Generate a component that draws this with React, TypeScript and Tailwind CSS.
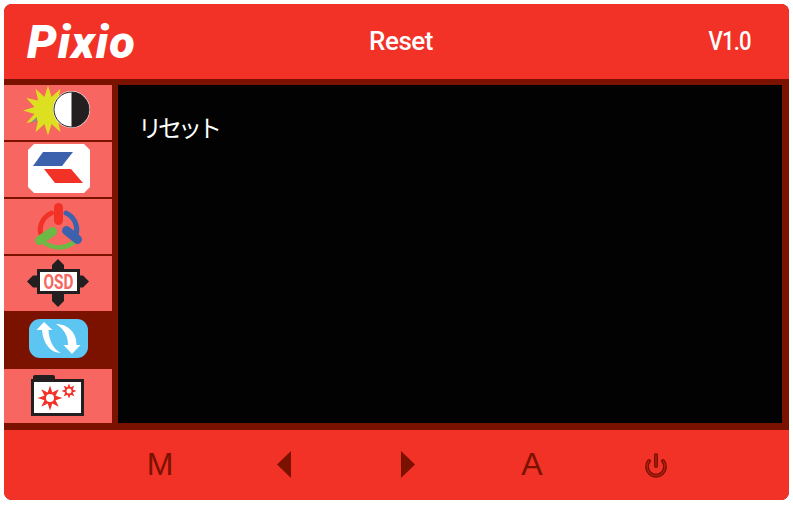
const Row = ({ active, box, className, children }: { active?: boolean; box: string; className?: string; children: React.ReactNode }) => (
  <div className={(active ? "h-[58px] bg-[#7b1200] " : "bg-[#f76660] ") + className}>
    <svg viewBox={box} className="block w-full h-full">{children}</svg>
  </div>
)

const spikes = (cx: number, cy: number, outer: number, inner: number, n: number) => {
  const pts: string[] = []
  for (let i = 0; i < n * 2; i++) {
    const r = i % 2 === 0 ? outer : inner
    const a = (Math.PI * i) / n - Math.PI / 2
    pts.push(`${(cx + r * Math.cos(a)).toFixed(1)},${(cy + r * Math.sin(a)).toFixed(1)}`)
  }
  return pts.join(" ")
}

export default function App() {
  return (
    <div className="w-[793px] h-[505px] bg-white p-1" style={{ fontFamily: "Roboto, sans-serif" }}>
      <div className="w-[785px] h-[496px] rounded-lg overflow-hidden bg-[#7b1200] flex flex-col">
        <div className="h-[75px] bg-[#f23127] flex items-center text-white pl-[23px]">
          <div className="w-[316px] text-[47px] leading-none font-black italic tracking-[1px]" style={{ fontFamily: "Roboto, sans-serif" }}>Pixio</div>
          <div className="w-[116px] text-center text-[26px] font-medium tracking-[-0.5px]">Reset</div>
          <div className="flex-1 text-right pr-[45px] text-[26px] font-medium tracking-[-1px] scale-x-[.85] origin-right">V1.0</div>
        </div>
        <div className="flex mt-[6px] h-[338px]">
          <div className="w-[108px] flex flex-col">
            <Row box="4 85 108 55" className="h-[55px]">
              <polygon points={spikes(48, 110.5, 25, 14, 12)} fill="#dde021" />
              <polygon points="30,123 37,117 37,121" fill="#8a8a8a" />
              <circle cx="71.5" cy="109.5" r="18.5" fill="#fff" />
              <circle cx="71.5" cy="109.5" r="17.5" fill="#fff" stroke="#231f20" strokeWidth="1" />
              <path d="M71.5 92a17.5 17.5 0 0 1 0 35z" fill="#231f20" />
            </Row>
            <Row box="4 142 108 55" className="h-[55px] mt-[2px]">
              <polygon points="34,144 84,144 90,150 90,187 84,193 34,193 28,187 28,150" fill="#fff" />
              <polygon points="33,166 43,152 73,152 62,166" fill="#3d62ad" />
              <polygon points="44,169 71,169 83,183 55,183" fill="#f23127" />
            </Row>
            <Row box="4 199 108 55" className="h-[55px] mt-[2px]">
              <path d="M51.5 213A18.5 18.5 0 0 0 40.5 233" fill="none" stroke="#f23127" strokeWidth="5" strokeLinecap="round" />
              <path d="M66 213A18.5 18.5 0 0 1 76.5 233" fill="none" stroke="#3d62ad" strokeWidth="5" strokeLinecap="round" />
              <path d="M45 243Q58.5 252 73 243" fill="none" stroke="#6cb945" strokeWidth="4.5" strokeLinecap="round" />
              <line x1="58.5" y1="207.5" x2="58.5" y2="220.5" stroke="#f23127" strokeWidth="9" strokeLinecap="round" />
              <line x1="66.5" y1="230.5" x2="77.5" y2="239.5" stroke="#3d62ad" strokeWidth="9" strokeLinecap="round" />
              <line x1="52.5" y1="231.5" x2="39.5" y2="240.5" stroke="#6cb945" strokeWidth="9" strokeLinecap="round" />
            </Row>
            <Row box="4 256 108 55" className="h-[55px] mt-[2px]">
              <polygon points="58,259 64,265 64,270 52,270 52,265" fill="#231f20" />
              <polygon points="58,307 64,301 64,293 52,293 52,301" fill="#231f20" />
              <polygon points="27,281.5 33,275.5 38,275.5 38,287.5 33,287.5" fill="#231f20" />
              <polygon points="89,281.5 83,275.5 79,275.5 79,287.5 83,287.5" fill="#231f20" />
              <rect x="37" y="269" width="43" height="25" fill="#231f20" />
              <rect x="40" y="272" width="37" height="19" fill="#fff" />
              <text x="58.5" y="289" textAnchor="middle" fontFamily="Roboto, sans-serif" fontWeight="700" fontSize="20" fill="#f76660" textLength="30" lengthAdjust="spacingAndGlyphs">OSD</text>
            </Row>
            <Row active box="4 311 108 58">
              <rect x="29" y="319" width="59" height="39" rx="11" fill="#5cc5f2" />
              <path d="M44 322L52.5 330L48.5 330C49 340 53 349 61 353C51 353 43 344 42 330L36.5 330Z" fill="#fff" />
              <path d="M56 324C68 324 77 333 76.5 345L80.5 345L72 354L63.5 345L68 345C68 336 65 330 56 324Z" fill="#fff" />
            </Row>
            <Row box="4 369 108 54" className="h-[54px]">
              <path d="M33 379V377a2 2 0 0 1 2-2H53a2 2 0 0 1 2 2V379Z" fill="#231f20" />
              <rect x="31" y="379" width="53" height="37" fill="#231f20" />
              <rect x="34" y="382" width="47" height="31" fill="#fff" />
              <polygon points={spikes(50, 398, 12.5, 6, 8)} fill="#f23127" />
              <circle cx="50" cy="398" r="4" fill="#fff" />
              <polygon points={spikes(69, 391, 7.5, 4, 8)} fill="#f23127" />
              <circle cx="69" cy="391" r="2.5" fill="#fff" />
            </Row>
          </div>
          <div className="ml-[6px] w-[664px] bg-[#020202] pt-[25px] pl-[20px] text-white text-[24px] leading-[34px] tracking-[-4px]" style={{ fontFamily: "'Noto Sans CJK JP', sans-serif" }}>
            リセット
          </div>
        </div>
        <div className="mt-[7px] h-[70px] bg-[#f23127] flex items-center pl-[94px] text-[#7b1200] text-[32px] leading-none pb-[2px]" style={{ fontFamily: "'Liberation Sans', sans-serif" }}>
          <div className="w-[124px] flex justify-center">M</div>
          <div className="w-[124px] flex justify-center">
            <svg width="14" height="27" viewBox="0 0 14 27"><polygon points="14,0 14,27 0,13.5" fill="#7b1200" /></svg>
          </div>
          <div className="w-[124px] flex justify-center">
            <svg width="14" height="27" viewBox="0 0 14 27"><polygon points="0,0 0,27 14,13.5" fill="#7b1200" /></svg>
          </div>
          <div className="w-[124px] flex justify-center">A</div>
          <div className="w-[124px] flex justify-center">
            <svg width="24" height="28" viewBox="0 0 24 28" fill="none" stroke="#7b1200">
              <path d="M5 11A9 9 0 1 0 19 11" strokeWidth="4" strokeLinecap="round" />
              <path d="M5 11A9 9 0 1 0 19 11" strokeWidth="1.2" stroke="#b81f14" strokeLinecap="round" />
              <line x1="12" y1="5" x2="12" y2="16" strokeWidth="4" strokeLinecap="round" />
              <line x1="12" y1="5" x2="12" y2="16" strokeWidth="1.2" stroke="#b81f14" strokeLinecap="round" />
            </svg>
          </div>
        </div>
      </div>
    </div>
  )
}
